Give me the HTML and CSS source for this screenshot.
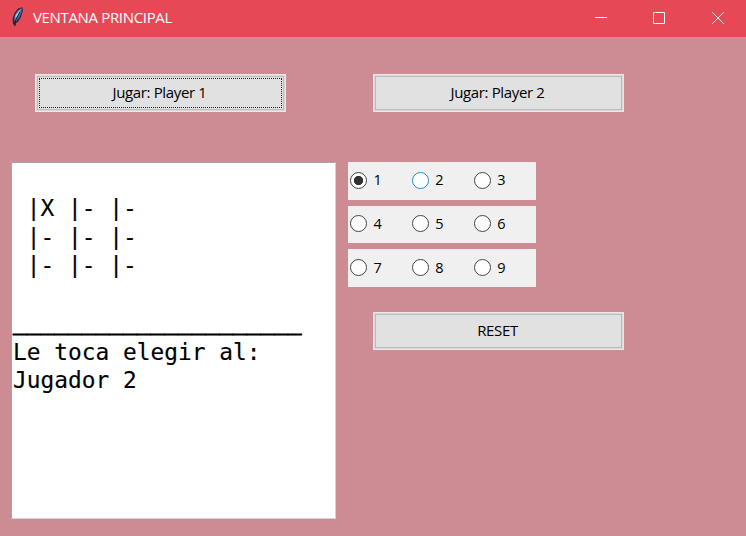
FILE: index.html
```html
<!DOCTYPE html>
<html lang="es">
<head>
<meta charset="utf-8">
<title>VENTANA PRINCIPAL</title>
<link rel="stylesheet" href="styles.css">
</head>
<body>
<header class="titlebar">
  <svg class="feather" width="14" height="20" viewBox="0 0 14 20">
    <path d="M5 19 3 17 2.500 12 4.500 6 8 1.500 12.500 .3 12.800 4 11 10 8 15 6 16Z" fill="#33283a"/>
    <path d="M4 13.500 4.800 8 8 3.300 11.800 1.300 11.500 5 9.500 10 6.500 14Z" fill="#4474ad"/>
    <path d="M4.800 11.500 6 7.500 10.700 2 8.300 8Z" fill="#a9cbe9"/>
    <path d="M5 19 5.600 13.500 9.800 5" fill="none" stroke="#20222d"/>
  </svg>
  <h1 class="title">VENTANA PRINCIPAL</h1>
  <div class="controls">
    <svg width="58" height="36" viewBox="0 0 58 36"><path d="M24 17.500H36"/></svg>
    <svg width="58" height="36" viewBox="0 0 58 36"><path d="M24.500 12.500H35.500V23.500H24.500Z"/></svg>
    <svg width="58" height="36" viewBox="0 0 58 36"><path d="M25.300 12.300 36.700 23.700M36.700 12.300 25.300 23.700"/></svg>
  </div>
</header>
<main class="window">
  <div class="players">
    <button class="btn focused"><span class="player">Jugar: Player 1</span></button>
    <button class="btn"><span class="player">Jugar: Player 2</span></button>
  </div>
  <div class="game">
    <pre class="board">

 |X |- |-
 |- |- |-
 |- |- |-

<span class="rule">_____________________</span>
Le toca elegir al:
Jugador 2</pre>
    <div class="side">
      <div class="row">
        <label class="option"><i class="radio checked"></i>1</label>
        <label class="option"><i class="radio hover"></i>2</label>
        <label class="option"><i class="radio"></i>3</label>
      </div>
      <div class="row">
        <label class="option"><i class="radio"></i>4</label>
        <label class="option"><i class="radio"></i>5</label>
        <label class="option"><i class="radio"></i>6</label>
      </div>
      <div class="row">
        <label class="option"><i class="radio"></i>7</label>
        <label class="option"><i class="radio"></i>8</label>
        <label class="option"><i class="radio"></i>9</label>
      </div>
      <button class="btn reset"><span>RESET</span></button>
    </div>
  </div>
</main>
</body>
</html>
```
FILE: styles.css
```css
* { box-sizing: border-box; }

body {
  margin: 0;
  width: 746px;
  height: 536px;
  overflow: hidden;
  background: #cd8b94;
  color: #000;
  font-family: "Open Sans", "Noto Sans", sans-serif;
}

.titlebar {
  display: flex;
  height: 37px;
  padding-left: 10px;
  background: #e74856;
  color: #fff;
}

.feather { margin-top: 7px; }

.title {
  margin: 0 0 0 9px;
  font-size: 15px;
  font-weight: 400;
  line-height: 34px;
  letter-spacing: -0.34px;
  white-space: nowrap;
}

.controls { display: flex; margin-left: auto; padding-right: 1px; }
.controls svg { fill: none; stroke: #fff; stroke-width: 1; }

.window {
  height: 499px;
  padding: 36px 0 0 11px;
  border-top: 1px solid #d2929b;
}

.players { display: flex; gap: 87px; padding-left: 24px; }

.btn {
  display: flex;
  align-items: center;
  justify-content: center;
  width: 251px;
  height: 38px;
  padding: 0 2px 2px 0;
  border: 1px solid #f0e4e5;
  background: #e1e1e1;
  box-shadow: inset 0 0 0 1px #d9d9d9, inset 0 0 0 2px #b9bcbc;
  color: #000;
  font: 15px/20px "Open Sans", "Noto Sans", sans-serif;
  letter-spacing: -0.36px;
}

.focused { padding: 0; }

.focused span {
  width: 243px;
  height: 30px;
  padding-right: 2px;
  border: 1px dotted #222;
  line-height: 27px;
}

.game { display: flex; gap: 12px; margin-top: 50px; }

.board {
  width: 325px;
  height: 357px;
  margin: 0;
  padding: 2px 0 0 1px;
  border: 1px solid #a9a5a6;
  border-right-color: #ddcfd1;
  border-bottom-color: #ddcfd1;
  background: #fff;
  font: 22.83px/28.75px "DejaVu Sans Mono", monospace;
  -webkit-text-stroke: 0.15px #000;
}

.rule {
  position: relative;
  top: -2px;
  -webkit-text-stroke: 1px #000;
}

.row {
  display: flex;
  width: 188px;
  height: 37.5px;
  margin-bottom: 6.2px;
  padding-left: 2.4px;
  background: #f0f0f0;
}

.option {
  display: flex;
  align-items: center;
  gap: 6px;
  width: 62.6px;
  font-size: 14.5px;
  line-height: 20px;
  padding-bottom: 1px;
}

.radio {
  width: 17px;
  height: 17px;
  border: 1.5px solid #444;
  border-radius: 50%;
  background: #fff;
}

.checked { background: radial-gradient(circle, #333 4.3px, #fff 5px); }
.hover { border-color: #1c85d8; }
.reset { margin: 25px 0 0 25px; }
```
